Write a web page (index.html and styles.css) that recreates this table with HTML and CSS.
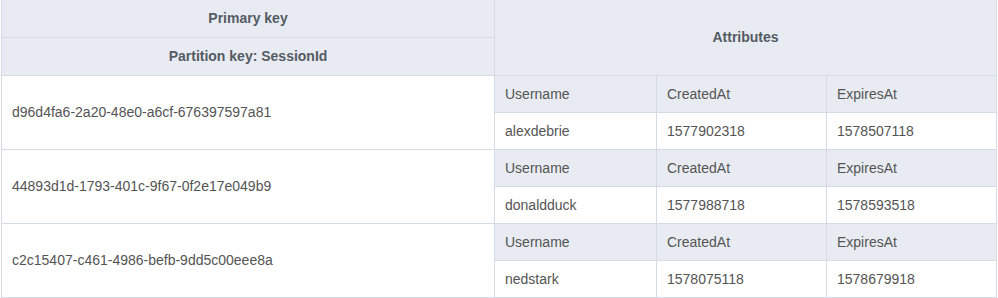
FILE: index.html
```html
<!DOCTYPE html>
<html>
<head>
<meta charset="utf-8">
<link rel="stylesheet" href="styles.css">
</head>
<body>
<div class="wrap">
<table class="ddb">
  <colgroup>
    <col class="c-pk">
    <col class="c-a1">
    <col class="c-a2">
    <col class="c-a3">
  </colgroup>
  <thead>
    <tr class="hrow hrow-top">
      <th class="head">Primary key</th>
      <th class="head" colspan="3" rowspan="2">Attributes</th>
    </tr>
    <tr class="hrow">
      <th class="head">Partition key: SessionId</th>
    </tr>
  </thead>
  <tbody>
    <tr class="drow">
      <td class="key" rowspan="2">d96d4fa6-2a20-48e0-a6cf-676397597a81</td>
      <td class="aname">Username</td>
      <td class="aname">CreatedAt</td>
      <td class="aname">ExpiresAt</td>
    </tr>
    <tr class="drow">
      <td class="aval">alexdebrie</td>
      <td class="aval">1577902318</td>
      <td class="aval">1578507118</td>
    </tr>
    <tr class="drow">
      <td class="key" rowspan="2">44893d1d-1793-401c-9f67-0f2e17e049b9</td>
      <td class="aname">Username</td>
      <td class="aname">CreatedAt</td>
      <td class="aname">ExpiresAt</td>
    </tr>
    <tr class="drow">
      <td class="aval">donaldduck</td>
      <td class="aval">1577988718</td>
      <td class="aval">1578593518</td>
    </tr>
    <tr class="drow">
      <td class="key" rowspan="2">c2c15407-c461-4986-befb-9dd5c00eee8a</td>
      <td class="aname">Username</td>
      <td class="aname">CreatedAt</td>
      <td class="aname">ExpiresAt</td>
    </tr>
    <tr class="drow">
      <td class="aval">nedstark</td>
      <td class="aval">1578075118</td>
      <td class="aval">1578679918</td>
    </tr>
  </tbody>
</table>
</div>
</body>
</html>
```
FILE: styles.css
```css
html, body {
  margin: 0;
  padding: 0;
  background: #ffffff;
}

.wrap {
  padding: 0 0 0 1px;
}

.ddb {
  border-collapse: collapse;
  table-layout: fixed;
  width: 996px;
  font-family: "Liberation Sans", Arial, Helvetica, sans-serif;
  font-size: 14px;
  color: #545454;
}

.c-pk { width: 493px; }
.c-a1 { width: 162px; }
.c-a2 { width: 170px; }
.c-a3 { width: 170px; }

.ddb th,
.ddb td {
  border: 1px solid #d5dbe4;
  padding: 0 10px;
  box-sizing: border-box;
  white-space: nowrap;
  overflow: hidden;
}

.ddb thead tr:first-child th {
  border-top: none;
}

.hrow {
  height: 38px;
}

.hrow-top {
  height: 37px;
}

.drow {
  height: 37px;
}

.head {
  background: #e8ecf2;
  font-weight: bold;
  color: #545b64;
  text-align: center;
}

.key {
  background: #ffffff;
  text-align: left;
}

.aname {
  background: #e8ecf2;
  text-align: left;
}

.aval {
  background: #ffffff;
  text-align: left;
}
```
